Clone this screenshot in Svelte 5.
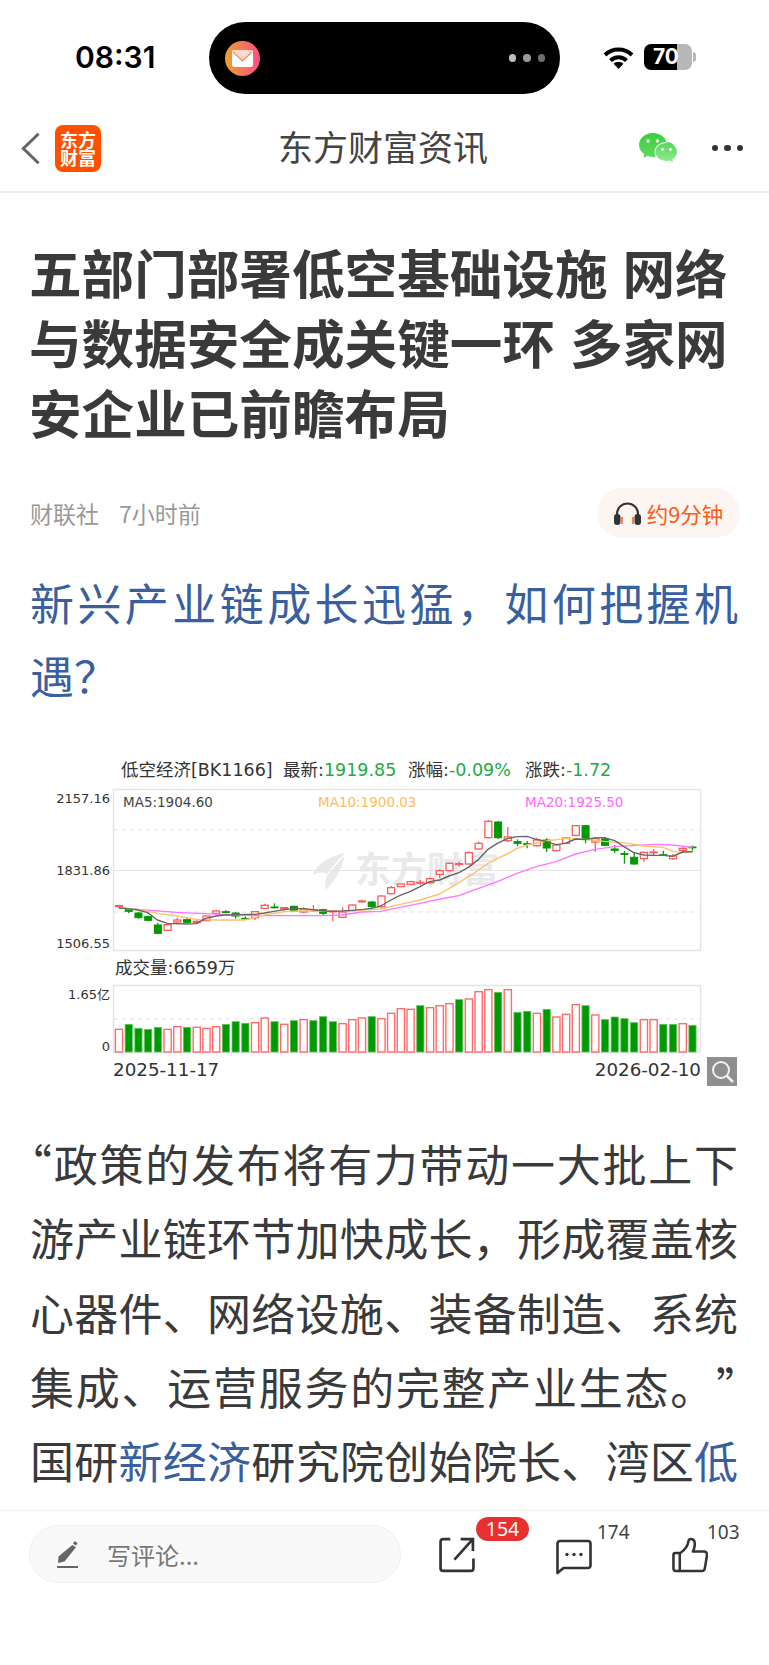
<script>
  // chart values are read in 1/3 px units, same grid as the price pane
  const cx = (i) => 119 + i * 9.72;
  const py = (v) => 750 + v / 3;
  const vy = (v) => 950 + v / 3;
  const lx = (p) => 30 + p / 3;
  const rx = (p) => 400 + p / 3;

  // [body top, body bottom, wick top, wick bottom, up]
  const candles = [
    [467, 469, 464, 474, 1], [477, 484, 475, 490, 0], [489, 503, 486, 506, 0], [500, 511, 497, 514, 0],
    [525, 550, 518, 553, 0], [524, 541, 524, 541, 1], [510, 516, 503, 518, 1], [509, 517, 505, 520, 0],
    [514, 518, 511, 521, 1], [498, 512, 498, 514, 1], [483, 490, 479, 492, 1], [485, 487, 481, 490, 0],
    [489, 498, 487, 506, 0], [505, 507, 499, 510, 0], [485, 503, 485, 510, 1], [466, 475, 461, 477, 1],
    [471, 473, 460, 475, 0], [473, 477, 471, 482, 1], [469, 483, 467, 486, 0], [477, 486, 472, 490, 1],
    [479, 482, 465, 486, 1], [479, 490, 476, 497, 0], [483, 485, 483, 514, 1], [486, 502, 472, 503, 1],
    [465, 482, 463, 484, 1], [453, 455, 449, 458, 1], [456, 470, 453, 473, 0], [438, 470, 436, 473, 1],
    [413, 431, 408, 433, 1], [402, 410, 400, 412, 1], [395, 403, 392, 405, 1], [397, 399, 390, 404, 1],
    [386, 398, 382, 402, 1], [362, 373, 358, 384, 1], [340, 362, 338, 364, 1], [341, 343, 335, 350, 1],
    [308, 342, 304, 344, 1], [280, 297, 275, 299, 1], [214, 263, 210, 265, 1], [216, 263, 214, 267, 0],
    [261, 272, 231, 277, 1], [275, 280, 268, 288, 0], [281, 283, 273, 295, 0], [270, 287, 263, 290, 1],
    [270, 294, 265, 306, 0], [285, 302, 282, 304, 1], [264, 280, 262, 283, 1], [227, 256, 225, 259, 1],
    [227, 269, 225, 280, 0], [266, 276, 261, 306, 1], [267, 286, 261, 289, 0], [297, 301, 285, 309, 0],
    [311, 313, 303, 341, 0], [322, 342, 308, 344, 0], [307, 326, 305, 335, 1], [306, 308, 297, 319, 1],
    [314, 316, 302, 318, 0], [318, 326, 312, 330, 1], [295, 301, 292, 306, 1], [291, 292, 287, 302, 0]
  ];

  // [bar top, up]
  const volumes = [
    [238, 1], [223, 0], [235, 0], [238, 0], [232, 0], [238, 1], [230, 1], [232, 0], [232, 1], [235, 1],
    [230, 1], [223, 0], [215, 0], [220, 0], [218, 1], [204, 1], [215, 0], [223, 1], [212, 0], [209, 1],
    [212, 0], [200, 0], [215, 0], [221, 1], [209, 1], [204, 1], [200, 0], [206, 1], [190, 1], [176, 1],
    [178, 1], [167, 0], [173, 1], [167, 1], [161, 1], [149, 0], [147, 1], [125, 1], [119, 1], [127, 0],
    [119, 1], [187, 0], [184, 0], [190, 1], [178, 0], [201, 1], [193, 1], [164, 1], [167, 0], [195, 1],
    [209, 0], [201, 0], [206, 0], [218, 0], [209, 1], [209, 1], [223, 0], [223, 0], [221, 1], [226, 0]
  ];

  const line = (left, right) =>
    [...left.map(([x, y]) => `${lx(x)},${py(y)}`), ...right.map(([x, y]) => `${rx(x)},${py(y)}`)].join(' ');

  const ma5 = line(
    [[267, 474], [295, 476], [323, 480], [353, 488], [382, 510], [412, 520], [471, 522], [499, 521], [527, 505], [558, 498], [586, 495], [616, 495], [645, 493], [675, 493], [703, 489], [732, 484], [762, 479], [790, 476], [820, 476], [848, 479], [880, 483], [908, 484], [936, 483], [966, 481], [1000, 478], [1024, 475], [1052, 468], [1083, 450]],
    [[0, 436], [30, 425], [60, 410], [88, 395], [119, 390], [147, 378], [177, 368], [205, 352], [236, 328], [264, 298], [292, 280], [322, 266], [351, 260], [381, 259], [409, 268], [440, 275], [468, 284], [496, 280], [527, 267], [555, 268], [585, 264], [613, 263], [644, 272], [672, 290], [700, 307], [731, 315], [759, 316], [790, 316], [818, 319], [848, 306], [878, 305]]
  );
  const ma10 = line(
    [[267, 474], [323, 478], [382, 490], [440, 498], [499, 508], [558, 510], [645, 510], [675, 502], [703, 495], [762, 485], [820, 482], [880, 484], [936, 484], [994, 480], [1052, 477]],
    [[0, 463], [60, 450], [119, 432], [177, 398], [236, 360], [264, 340], [292, 325], [322, 312], [351, 295], [381, 285], [440, 273], [496, 265], [555, 268], [613, 274], [672, 278], [731, 288], [790, 292], [818, 304], [848, 308], [878, 306]]
  );
  const ma20 = line(
    [[267, 474], [440, 487], [527, 491], [616, 495], [703, 497], [790, 497], [880, 497], [936, 495], [994, 486], [1052, 484]],
    [[0, 472], [60, 460], [119, 447], [177, 437], [236, 415], [292, 395], [351, 370], [409, 350], [468, 335], [527, 312], [585, 298], [644, 290], [700, 287], [759, 283], [818, 285], [878, 292]]
  );
</script>

<div class="page">
  <header class="status">
    <div class="time">08:31</div>
    <div class="island">
      <svg class="mail" viewBox="0 0 35 35">
        <defs>
          <linearGradient id="mailFill" x1="0" x2="1" y1="0" y2="0">
            <stop offset="0" stop-color="#eda02e" />
            <stop offset="1" stop-color="#fb4f86" />
          </linearGradient>
        </defs>
        <circle cx="17.5" cy="17.5" r="17.5" fill="url(#mailFill)" />
        <rect x="7" y="9" width="21" height="17" rx="2.5" fill="#fff" />
        <path d="M7.5 10.5 17.5 20 27.5 10.5V10a1 1 0 0 0-1-1H8.500a1 1 0 0 0-1 1Z" fill="#fbd9cf" />
        <path d="M8 11 17.500 20 27 11" fill="none" stroke="#f58a5c" stroke-width="1.200" />
      </svg>
      <div class="dots">
        <span></span><span></span><span></span>
      </div>
    </div>
    <div class="sys">
      <svg class="wifi" viewBox="0 0 31 23">
        <path d="M2 9A19.500 19.500 0 0 1 29 9" fill="none" stroke="#000" stroke-width="4" />
        <path d="M7.500 14.500A11.500 11.500 0 0 1 23.500 14.500" fill="none" stroke="#000" stroke-width="4" />
        <path d="M15.500 23 10.500 17.800A7 7 0 0 1 20.500 17.800Z" fill="#000" />
      </svg>
      <div class="battery">
        <div class="cell"><span>70</span></div>
        <i class="nub"></i>
      </div>
    </div>
  </header>

  <nav class="topnav">
    <div class="nav-left">
      <svg class="back" viewBox="0 0 20 34">
        <path d="M18.500 1.500 2.500 17 18.500 32.500" fill="none" stroke="#666" stroke-width="3.200" />
      </svg>
      <div class="logo"><span>东方</span><span>财富</span></div>
    </div>
    <div class="nav-title">东方财富资讯</div>
    <div class="nav-right">
      <svg class="wechat" viewBox="0 0 40 31">
        <defs>
          <linearGradient id="wx" x1="0" x2="0" y1="0" y2="1">
            <stop offset="0" stop-color="#55d855" />
            <stop offset="1" stop-color="#92ea92" />
          </linearGradient>
          <linearGradient id="wxBig" x1="0" x2="0" y1="0" y2="1">
            <stop offset="0" stop-color="#3ccf3c" />
            <stop offset="1" stop-color="#62da62" />
          </linearGradient>
        </defs>
        <path d="M14 0C6.300 0 0 5.300 0 12c0 3.800 2 7 5.200 9.200L4.500 25l4.200-2c1.700.6 3.500 1 5.300 1 7.700 0 14-5.300 14-12S21.700 0 14 0Z" fill="url(#wxBig)" />
        <path d="M27.500 9c-6.600 0-12 4.500-12 10s5.400 10 12 10c1.300 0 2.500-.2 3.700-.5l3.300 2.200-.7-3.500c3-1.800 5.200-4.800 5.200-8.200 0-5.500-5.400-10-11.500-10Z" fill="#fff" />
        <path d="M27.500 10c-6 0-11 4-11 9s5 9 11 9c1.300 0 2.500-.2 3.700-.5l2.800 1.800-.6-3c2.800-1.600 4.600-4.300 4.600-7.300 0-5-4.500-10-10.500-10Z" fill="url(#wx)" />
        <circle cx="9" cy="8" r="1.700" fill="#fff" />
        <circle cx="18.500" cy="8" r="1.700" fill="#fff" />
        <circle cx="23.500" cy="16.500" r="1.400" fill="#fff" />
        <circle cx="31.500" cy="16.500" r="1.400" fill="#fff" />
      </svg>
      <div class="more"><span></span><span></span><span></span></div>
    </div>
  </nav>

  <main class="article">
    <h1>五部门部署低空基础设施 网络与数据安全成关键一环 多家网安企业已前瞻布局</h1>

    <div class="meta">
      <div class="source">
        <span>财联社</span>
        <span>7小时前</span>
      </div>
      <div class="listen">
        <svg class="phones" viewBox="0 0 27 23">
          <path d="M3 15V12a10.500 10.500 0 0 1 21 0v3" fill="none" stroke="#333" stroke-width="2.200" />
          <rect x="0" y="12" width="6.500" height="11" rx="3" fill="#333" />
          <rect x="20.500" y="12" width="6.500" height="11" rx="3" fill="#333" />
          <path d="M8 15v7M19 15v7" stroke="#ff5a14" stroke-width="1.500" />
        </svg>
        <span>约9分钟</span>
      </div>
    </div>

    <p class="lead">新兴产业链成长迅猛，如何把握机遇？</p>

    <svg class="chart" viewBox="0 750 769 340">
      <!-- watermark sits under everything -->
      <g fill="#e9e9ec">
        <path d="M345 853C330 856 316 864 313 875 318 872 323 872 327 874 332 867 338 860 345 853Z" />
        <path d="M345 855C342 868 336 880 326 890 325 885 325 880 327 876 332 869 339 862 345 855Z" />
        <text class="wm" x="355" y="883">东方财富</text>
      </g>

      <g class="frame">
        <rect x="113.500" y="789.500" width="587" height="161" />
        <rect x="113.500" y="985.500" width="587" height="67" />
      </g>
      <line x1="114" x2="700" y1="830" y2="830" class="dash" />
      <line x1="114" x2="700" y1="870.500" y2="870.500" class="solid" />
      <line x1="114" x2="700" y1="912" y2="912" class="dash" />
      <line x1="114" x2="700" y1="1019" y2="1019" class="dash" />

      {#each candles as [top, bottom, wickTop, wickBottom, up], i}
        <g class={up ? 'up' : 'down'}>
          <line x1={cx(i)} x2={cx(i)} y1={py(wickTop)} y2={py(wickBottom)} />
          <rect x={cx(i) - 3.500} y={py(top)} width="7" height={Math.max(py(bottom) - py(top), 0.8)} />
        </g>
      {/each}

      <polyline points={ma20} class="ma m20" />
      <polyline points={ma10} class="ma m10" />
      <polyline points={ma5} class="ma m5" />

      {#each volumes as [top, up], i}
        <rect
          class={up ? 'vol-up' : 'vol-down'}
          x={cx(i) - 3.600}
          y={vy(top)}
          width="7.200"
          height={1052 - vy(top)}
        />
      {/each}

      <g class="cap">
        <text x="121" y="776">低空经济[BK1166]</text>
        <text x="283" y="776">最新:<tspan class="green">1919.85</tspan></text>
        <text x="408" y="776">涨幅:<tspan class="green">-0.09%</tspan></text>
        <text x="525" y="776">涨跌:<tspan class="green">-1.72</tspan></text>
        <text x="115" y="974">成交量:6659万</text>
      </g>

      <g class="axis">
        <text x="110" y="803">2157.16</text>
        <text x="110" y="875">1831.86</text>
        <text x="110" y="948">1506.55</text>
        <text x="110" y="999">1.65亿</text>
        <text x="110" y="1051">0</text>
      </g>

      <g class="legend">
        <text x="123" y="807" fill="#444">MA5:1904.60</text>
        <text x="318" y="807" fill="#ffbb55">MA10:1900.03</text>
        <text x="525" y="807" fill="#ff66ff">MA20:1925.50</text>
      </g>

      <g class="dates">
        <text x="113" y="1076">2025-11-17</text>
        <text x="701" y="1076" text-anchor="end">2026-02-10</text>
      </g>

      <rect x="707" y="1057" width="30" height="29" fill="#8f8f8f" />
      <circle cx="721" cy="1070" r="8" fill="none" stroke="#f2f2f2" stroke-width="2" />
      <path d="M727 1076l6 6" stroke="#f2f2f2" stroke-width="2.500" />
    </svg>

    <p class="body">
      <span class="q">“</span>政策的发布将有力带动一大批上下游产业链环节加快成长，形成覆盖核心器件、网络设施、装备制造、系统集成、运营服务的完整产业生态。<span class="q">”</span><wbr />国研<span class="link">新经济</span>研究院创始院长、湾区<span class="link">低</span>
    </p>
  </main>

  <footer class="bottom">
    <div class="comment-box">
      <svg class="pen" viewBox="0 0 22 27">
        <path d="M17.500 0 20.500 2 19 4.500 16 2.700ZM15.300 4 19 6.300 7.500 20.500 1 22 1.500 15.500Z" fill="#666" />
        <rect x="0" y="25" width="21" height="2" fill="#666" />
      </svg>
      <span>写评论...</span>
    </div>
    <div class="actions">
      <div class="act share">
        <svg viewBox="0 0 35 35">
          <path d="M11 2H4a2.500 2.500 0 0 0-2.500 2.500v26A2.500 2.500 0 0 0 4 33h27a2.500 2.500 0 0 0 2.500-2.500V21" fill="none" stroke="#333" stroke-width="2.600" />
          <path d="M15 22 32.500 2.500M21 2h12v11.500" fill="none" stroke="#333" stroke-width="2.600" />
        </svg>
        <span class="badge">154</span>
      </div>
      <div class="act talk">
        <svg viewBox="0 0 36 35">
          <path d="M1.500 33.500V4A2.500 2.500 0 0 1 4 1.500h28A2.500 2.500 0 0 1 34.500 4v22a2.500 2.500 0 0 1-2.500 2.500H7.500Z" fill="none" stroke="#333" stroke-width="2.600" stroke-linejoin="round" />
          <circle cx="11" cy="15" r="1.700" fill="#333" />
          <circle cx="18" cy="15" r="1.700" fill="#333" />
          <circle cx="25" cy="15" r="1.700" fill="#333" />
        </svg>
        <span class="count">174</span>
      </div>
      <div class="act thumb">
        <svg viewBox="0 0 37 36">
          <path d="M8 16H3.500A2 2 0 0 0 1.500 18v14a2.500 2.500 0 0 0 2.500 2.500h4" fill="none" stroke="#333" stroke-width="2.600" />
          <path d="M8 34.500V16.500C13 13 16.500 8 17 3.500 17.300.8 22 .6 23 4c1 3.500 0 7.500-1.500 10.500h11.500a3 3 0 0 1 3 3.500L33.700 32a3 3 0 0 1-3 2.500Z" fill="none" stroke="#333" stroke-width="2.600" stroke-linejoin="round" />
        </svg>
        <span class="count">103</span>
      </div>
    </div>
  </footer>
</div>

<style>
  :global(body) {
    margin: 0;
    background: #fff;
  }

  .page {
    width: 769px;
    height: 1665px;
    display: flex;
    flex-direction: column;
    overflow: hidden;
    font-family: "Noto Sans CJK SC", "Noto Sans", sans-serif;
    color: #333;
  }

  /* status bar */
  .status {
    flex: none;
    height: 105px;
    box-sizing: border-box;
    padding-top: 22px;
    display: flex;
    align-items: flex-start;
  }
  .time {
    width: 209px;
    box-sizing: border-box;
    padding: 15px 0 0 75px;
    font: 600 30px/40px Inter, sans-serif;
    color: #000;
  }
  .island {
    width: 351px;
    height: 72px;
    border-radius: 36px;
    background: #000;
    display: flex;
    align-items: center;
    justify-content: space-between;
    padding: 0 15px 0 16px;
    box-sizing: border-box;
  }
  .mail {
    width: 35px;
    height: 35px;
  }
  .dots {
    display: flex;
    gap: 7px;
  }
  .dots span {
    width: 7.500px;
    height: 7.500px;
    border-radius: 50%;
    background: #bdbdbd;
  }
  .dots span:nth-child(2) {
    background: #9a9a9a;
  }
  .dots span:nth-child(3) {
    background: #6e6e6e;
  }
  .sys {
    margin-left: 43px;
    padding-top: 22px;
    display: flex;
    align-items: center;
    gap: 10px;
  }
  .wifi {
    width: 31px;
    height: 23px;
  }
  .battery {
    display: flex;
    align-items: center;
    gap: 1px;
  }
  .cell {
    width: 48px;
    height: 26px;
    border-radius: 7px;
    background: linear-gradient(90deg, #000 0 33px, #b8b8b8 33px);
    overflow: hidden;
  }
  .cell span {
    display: block;
    width: 44px;
    text-align: center;
    font: 700 21px/26px Inter, sans-serif;
    color: #fff;
  }
  .nub {
    width: 3px;
    height: 10px;
    border-radius: 0 3px 3px 0;
    background: #b8b8b8;
  }

  /* nav */
  .topnav {
    flex: none;
    height: 86px;
    border-bottom: 2px solid #eee;
    display: grid;
    grid-template-columns: 1fr auto 1fr;
    align-items: center;
  }
  .nav-left {
    display: flex;
    align-items: center;
    padding-left: 21px;
    gap: 15px;
  }
  .back {
    width: 19px;
    height: 33px;
  }
  .logo {
    width: 46px;
    height: 47px;
    border-radius: 8px;
    background: #ff5000;
    color: #fff;
    display: flex;
    flex-direction: column;
    align-items: center;
    justify-content: center;
    font-size: 18px;
    font-weight: 700;
    line-height: 18.500px;
  }
  .nav-title {
    font-size: 35px;
    line-height: 44px;
    color: #444;
    margin: 0 0 4px -3px;
  }
  .nav-right {
    display: flex;
    align-items: center;
    justify-content: flex-end;
    gap: 34px;
    padding-right: 26px;
    padding-left: 1px;
  }
  .wechat {
    width: 40px;
    height: 31px;
    margin-right: -1px;
  }
  .more {
    display: flex;
    gap: 6px;
  }
  .more span {
    width: 6.500px;
    height: 6.500px;
    border-radius: 50%;
    background: #333;
  }

  /* article */
  .article {
    flex: 1;
    min-height: 0;
    overflow: hidden;
    padding: 43px 31px 0 30px;
  }
  h1 {
    margin: 0 0 0 -1px;
    font-size: 52.600px;
    line-height: 70px;
    font-weight: 700;
    color: #3a3a3a;
    word-spacing: 3px;
  }
  .meta {
    margin-top: 42px;
    height: 50px;
    display: flex;
    align-items: center;
    justify-content: space-between;
  }
  .source {
    display: flex;
    gap: 20px;
    font-size: 23px;
    color: #999;
  }
  .listen {
    width: 143px;
    height: 50px;
    border-radius: 25px;
    background: #fdf5f2;
    display: flex;
    align-items: center;
    justify-content: center;
    gap: 6px;
    font-size: 21.500px;
    color: #ff5a14;
    margin-right: -2px;
  }
  .phones {
    width: 27px;
    height: 23px;
  }
  .lead {
    margin: 28px 0 0;
    font-size: 44px;
    line-height: 73px;
    color: #3a5f9f;
    text-align: justify;
  }
  .chart {
    display: block;
    width: 769px;
    height: 340px;
    margin: 38px 0 36px -30px;
  }
  .body {
    margin: 0;
    font-size: 44px;
    line-height: 74.250px;
    color: #3a3a3a;
    text-align: justify;
    text-align-last: justify;
    text-spacing-trim: space-all;
  }
  .q {
    font-feature-settings: "halt";
  }
  .link {
    color: #3a5f9f;
  }

  /* chart bits */
  .frame rect {
    fill: none;
    stroke: #e5e5ea;
    stroke-width: 1.500;
  }
  .dash {
    stroke: #e2e2e2;
    stroke-width: 1.200;
    stroke-dasharray: 4 4;
  }
  .solid {
    stroke: #e6e6e6;
    stroke-width: 1.200;
  }
  .up line {
    stroke: #ff5c5c;
    stroke-width: 1.300;
  }
  .up rect {
    fill: #fff;
    stroke: #ff5c5c;
    stroke-width: 1.300;
  }
  .down line {
    stroke: #0a9a0a;
    stroke-width: 1.300;
  }
  .down rect {
    fill: #009900;
    stroke: #009900;
    stroke-width: 1;
  }
  .vol-up {
    fill: #fff;
    stroke: #ff6b6b;
    stroke-width: 1.400;
  }
  .vol-down {
    fill: #009a00;
    stroke: #5fc05f;
    stroke-width: 0.800;
  }
  .ma {
    fill: none;
    stroke-linejoin: round;
  }
  .m5 {
    stroke: #666;
    stroke-width: 1.400;
  }
  .m10 {
    stroke: #ffc266;
    stroke-width: 1.400;
  }
  .m20 {
    stroke: #ff77ff;
    stroke-width: 1.400;
  }
  .wm {
    font-size: 36px;
    font-weight: 700;
  }
  .cap text {
    font-family: "DejaVu Sans", "Noto Sans CJK SC", sans-serif;
    font-size: 17.500px;
    fill: #333;
  }
  .green {
    fill: #22aa44;
  }
  .axis text {
    font-family: "DejaVu Sans", "Noto Sans CJK SC", sans-serif;
    font-size: 13px;
    fill: #333;
    text-anchor: end;
  }
  .legend text {
    font-family: "DejaVu Sans", sans-serif;
    font-size: 13.500px;
  }
  .dates text {
    font-family: "DejaVu Sans", sans-serif;
    font-size: 18.300px;
    fill: #333;
  }

  /* bottom bar */
  .bottom {
    flex: none;
    height: 155px;
    box-sizing: border-box;
    border-top: 1px solid #f2f2f2;
    padding: 14px 0 0 29px;
    display: flex;
    align-items: flex-start;
    background: #fff;
  }
  .comment-box {
    width: 372px;
    height: 58px;
    box-sizing: border-box;
    border: 1px solid #f1f1f1;
    border-radius: 29px;
    background: #f9f9f9;
    display: flex;
    align-items: center;
    gap: 28px;
    padding-left: 27px;
    font-size: 24px;
    color: #777;
  }
  .pen {
    width: 22px;
    height: 27px;
  }
  .actions {
    position: relative;
    display: flex;
    margin-left: 38px;
    padding-top: 12px;
  }
  .act {
    position: relative;
    width: 36px;
    height: 36px;
  }
  .act svg {
    display: block;
    width: 36px;
    height: 36px;
  }
  .talk {
    margin-left: 81px;
    top: 2px;
  }
  .thumb {
    margin-left: 80px;
  }
  .badge {
    position: absolute;
    left: 37px;
    top: -20px;
    width: 53px;
    height: 24px;
    border-radius: 12px;
    background: #e93030;
    color: #fff;
    font: 19.500px/24px "Noto Sans", sans-serif;
    text-align: center;
  }
  .count {
    position: absolute;
    left: 41px;
    top: -19px;
    font: 19px/24px "Noto Sans", sans-serif;
    color: #444;
  }
  .thumb .count {
    left: 35px;
    top: -17px;
  }
</style>
